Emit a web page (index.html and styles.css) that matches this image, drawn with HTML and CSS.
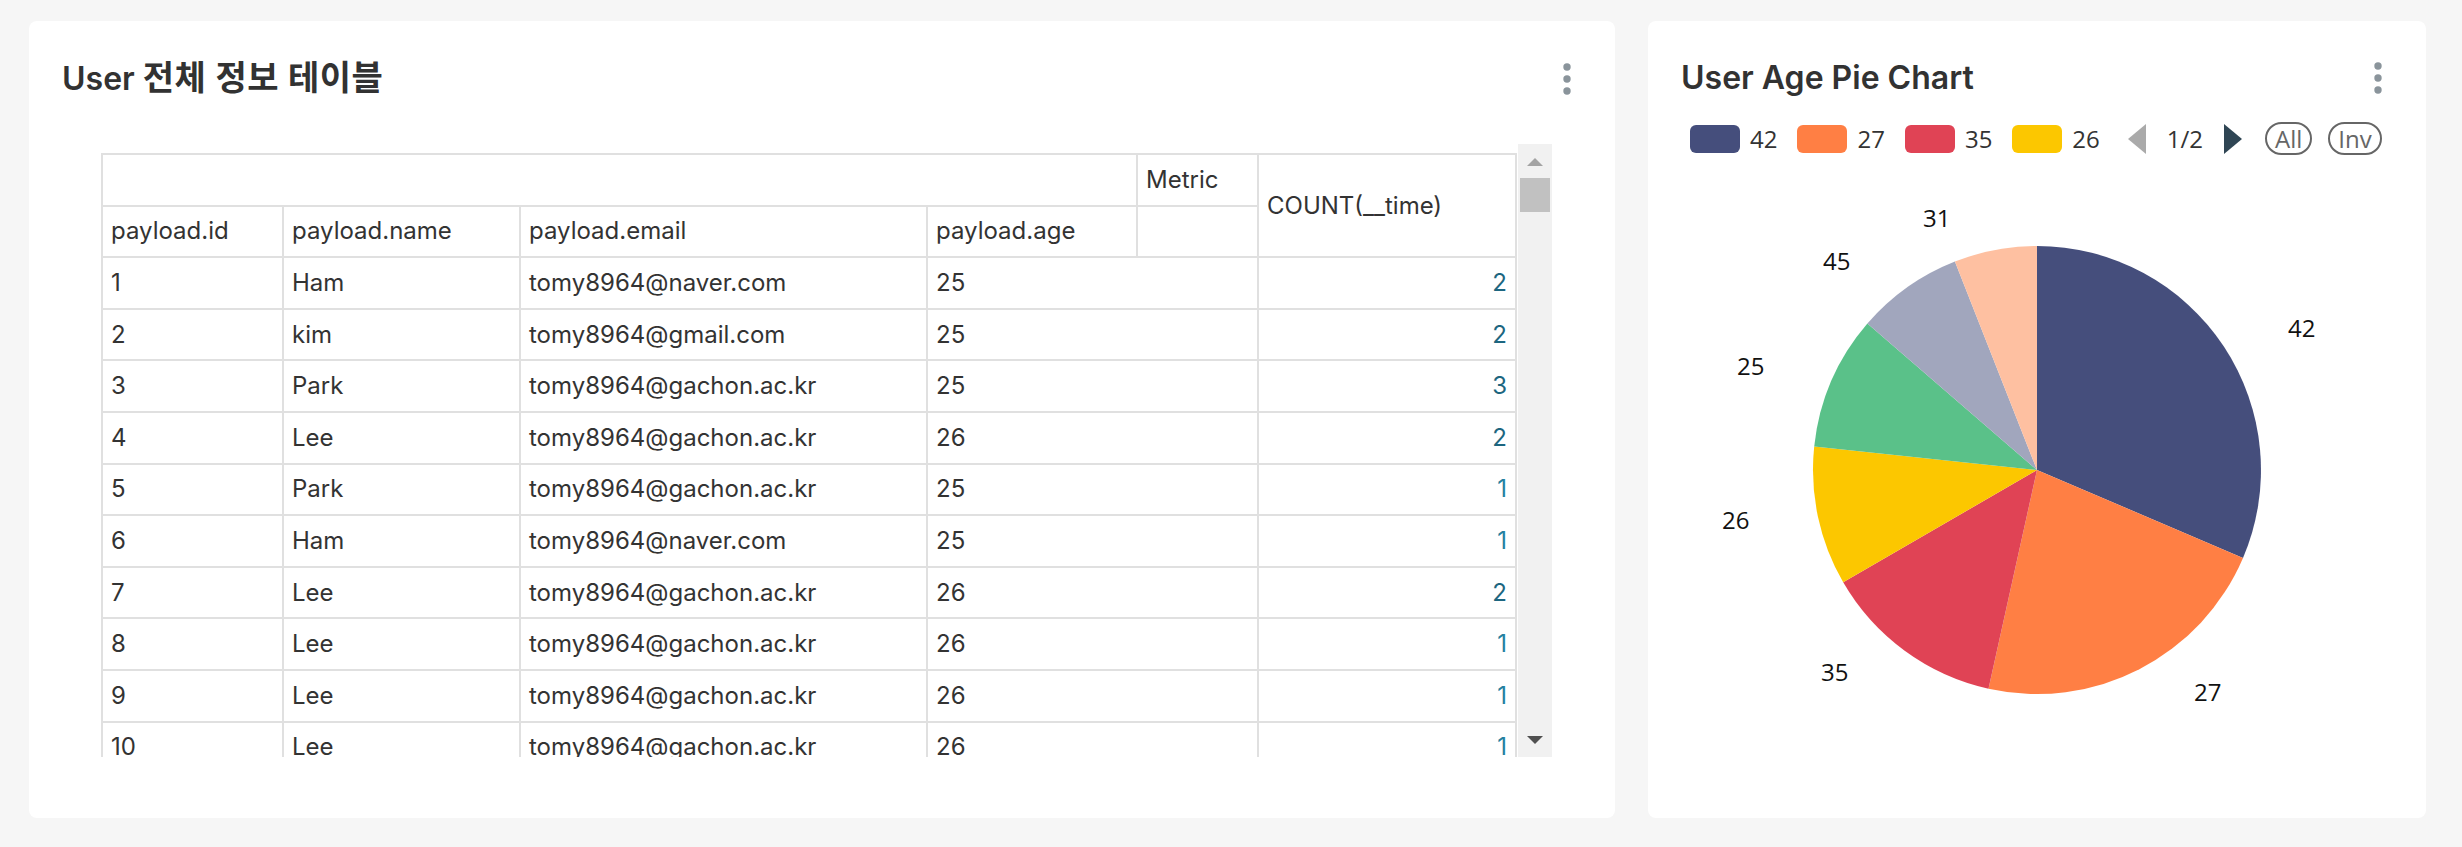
FILE: index.html
```html
<!DOCTYPE html>
<html lang="ko">
<head>
<meta charset="utf-8">
<title>Dashboard</title>
<link rel="stylesheet" href="styles.css">
</head>
<body>
<div class="dashboard">
  <section class="card card-table">
    <header class="card-header">
      <h2 class="card-title">User <span class="ko">전체 정보 테이블</span></h2>
      <span class="kebab"><svg width="8" height="32" viewBox="0 0 8 32"><circle cx="4" cy="4" r="3.7"/><circle cx="4" cy="16" r="3.7"/><circle cx="4" cy="28" r="3.7"/></svg></span>
    </header>
    <div class="table-wrap">
      <div class="table-viewport">
        <table class="data-table">
          <colgroup>
            <col class="c-id"><col class="c-name"><col class="c-email"><col class="c-age"><col class="c-metric"><col class="c-count">
          </colgroup>
          <thead>
            <tr><th colspan="4"></th><th>Metric</th><th rowspan="2">COUNT(__time)</th></tr>
            <tr><th>payload.id</th><th>payload.name</th><th>payload.email</th><th>payload.age</th><th></th></tr>
          </thead>
          <tbody>
            <tr><td>1</td><td>Ham</td><td>tomy8964@naver.com</td><td colspan="2">25</td><td class="num hi">2</td></tr>
            <tr><td>2</td><td>kim</td><td>tomy8964@gmail.com</td><td colspan="2">25</td><td class="num hi">2</td></tr>
            <tr><td>3</td><td>Park</td><td>tomy8964@gachon.ac.kr</td><td colspan="2">25</td><td class="num hi">3</td></tr>
            <tr><td>4</td><td>Lee</td><td>tomy8964@gachon.ac.kr</td><td colspan="2">26</td><td class="num hi">2</td></tr>
            <tr><td>5</td><td>Park</td><td>tomy8964@gachon.ac.kr</td><td colspan="2">25</td><td class="num">1</td></tr>
            <tr><td>6</td><td>Ham</td><td>tomy8964@naver.com</td><td colspan="2">25</td><td class="num">1</td></tr>
            <tr><td>7</td><td>Lee</td><td>tomy8964@gachon.ac.kr</td><td colspan="2">26</td><td class="num hi">2</td></tr>
            <tr><td>8</td><td>Lee</td><td>tomy8964@gachon.ac.kr</td><td colspan="2">26</td><td class="num">1</td></tr>
            <tr><td>9</td><td>Lee</td><td>tomy8964@gachon.ac.kr</td><td colspan="2">26</td><td class="num">1</td></tr>
            <tr><td>10</td><td>Lee</td><td>tomy8964@gachon.ac.kr</td><td colspan="2">26</td><td class="num">1</td></tr>
          </tbody>
        </table>
      </div>
      <div class="scrollbar">
        <span class="sb-up"></span>
        <span class="sb-thumb"></span>
        <span class="sb-down"></span>
      </div>
    </div>
  </section>

  <section class="card card-chart">
    <header class="card-header">
      <h2 class="card-title">User Age Pie Chart</h2>
      <span class="kebab"><svg width="8" height="32" viewBox="0 0 8 32"><circle cx="4" cy="4" r="3.7"/><circle cx="4" cy="16" r="3.7"/><circle cx="4" cy="28" r="3.7"/></svg></span>
    </header>
    <div class="legend">
      <span class="legend-item"><span class="swatch sw-navy"></span>42</span>
      <span class="legend-item"><span class="swatch sw-orange"></span>27</span>
      <span class="legend-item"><span class="swatch sw-red"></span>35</span>
      <span class="legend-item"><span class="swatch sw-yellow"></span>26</span>
      <span class="pager">
        <svg class="pg-arrow" width="18" height="30" viewBox="0 0 18 30"><path d="M18 0 L18 30 L0 15 Z" fill="#aaaaaa"/></svg>
        <span class="pg-count">1/2</span>
        <svg class="pg-arrow" width="18" height="30" viewBox="0 0 18 30"><path d="M0 0 L0 30 L18 15 Z" fill="#2f4554"/></svg>
      </span>
      <span class="sel">All</span>
      <span class="sel sel-inv">Inv</span>
    </div>
    <svg class="pie" width="778" height="600" viewBox="0 0 778 600">
      <path d="M389 300 L389 76 A224 224 0 0 1 595.0 387.9 Z" fill="#454E7C"/>
      <path d="M389 300 L595.0 387.9 A224 224 0 0 1 340.5 518.7 Z" fill="#FF7F44"/>
      <path d="M389 300 L340.5 518.7 A224 224 0 0 1 195.2 412.3 Z" fill="#E04355"/>
      <path d="M389 300 L195.2 412.3 A224 224 0 0 1 166.2 276.6 Z" fill="#FCC700"/>
      <path d="M389 300 L166.2 276.6 A224 224 0 0 1 219.4 153.6 Z" fill="#5AC189"/>
      <path d="M389 300 L219.4 153.6 A224 224 0 0 1 306.9 91.6 Z" fill="#A1A6BD"/>
      <path d="M389 300 L306.9 91.6 A224 224 0 0 1 389 76 Z" fill="#FEC0A1"/>
      <g class="pie-labels">
        <text x="640" y="167">42</text>
        <text x="546" y="531">27</text>
        <text x="173" y="511">35</text>
        <text x="74" y="359">26</text>
        <text x="89" y="205">25</text>
        <text x="175" y="100">45</text>
        <text x="275" y="57">31</text>
      </g>
    </svg>
  </section>
</div>
</body>
</html>
```
FILE: styles.css
```css
* { box-sizing: border-box; }

body {
  margin: 0;
  background: #f6f6f6;
  font-family: Inter, "Noto Sans CJK KR", sans-serif;
  color: #333333;
}

.dashboard {
  display: grid;
  grid-template-columns: 1586px 778px;
  column-gap: 33px;
  padding: 21px 0 0 29px;
}

.card {
  background: #ffffff;
  border-radius: 8px;
  height: 797px;
  display: flex;
  flex-direction: column;
}

.card-header {
  display: flex;
  align-items: center;
  justify-content: space-between;
  padding: 37px 44px 0 33px;
}

.card-title {
  margin: 0;
  font-size: 32px;
  line-height: 40px;
  font-weight: 600;
  color: #323232;
}

.card-title .ko {
  font-size: 34px;
  letter-spacing: 0.5px;
}

.kebab {
  display: flex;
}

.kebab svg {
  fill: #8a949b;
}

/* ---------- table ---------- */
.table-wrap {
  display: flex;
  margin: 45px 63px 0 72px;
  height: 613px;
}

.table-viewport {
  flex: 1;
  overflow: hidden;
  padding-top: 9px;
}

.data-table {
  border-collapse: separate;
  border-spacing: 0;
  table-layout: fixed;
  width: 1416px;
  border-top: 2px solid #e0e0e0;
  border-left: 2px solid #e0e0e0;
  font-size: 24px;
  line-height: 24px;
  color: #333333;
}

.c-id { width: 181px; }
.c-name { width: 237px; }
.c-email { width: 407px; }
.c-age { width: 210px; }
.c-metric { width: 121px; }
.c-count { width: 258px; }

.data-table th,
.data-table td {
  border-right: 2px solid #e0e0e0;
  border-bottom: 2px solid #e0e0e0;
  padding: 12.8px 8px;
  text-align: left;
  font-weight: 400;
  vertical-align: middle;
  white-space: nowrap;
  overflow: hidden;
}

.data-table td.num {
  text-align: right;
  color: #2480a0;
}

.data-table td.num.hi {
  color: #1c6680;
}

/* fake scrollbar */
.scrollbar {
  width: 34px;
  background: #f1f1f1;
  display: flex;
  flex-direction: column;
  align-items: center;
}

.sb-up {
  margin-top: 14px;
  width: 0;
  height: 0;
  border-left: 8px solid transparent;
  border-right: 8px solid transparent;
  border-bottom: 8px solid #a3a3a3;
}

.sb-thumb {
  margin-top: 12px;
  width: 30px;
  height: 34px;
  background: #c1c1c1;
}

.sb-down {
  margin-top: auto;
  margin-bottom: 13px;
  width: 0;
  height: 0;
  border-left: 8px solid transparent;
  border-right: 8px solid transparent;
  border-top: 8px solid #505050;
}

/* ---------- chart ---------- */
.legend {
  display: flex;
  align-items: center;
  height: 33px;
  margin: 24px 0 0 42px;
  font-family: "Open Sans", sans-serif;
  font-size: 24px;
  color: #333333;
}

.legend-item {
  display: flex;
  align-items: center;
  margin-right: 20px;
}

.swatch {
  width: 50px;
  height: 28px;
  border-radius: 6px;
  margin-right: 10px;
}

.sw-navy { background: #454E7C; }
.sw-orange { background: #FF7F44; }
.sw-red { background: #E04355; }
.sw-yellow { background: #FCC700; }

.pager {
  display: flex;
  align-items: center;
  margin-left: 8px;
}

.pg-count {
  margin: 0 21px;
}

.sel {
  margin-left: 23px;
  height: 33px;
  line-height: 29px;
  padding: 0 8px;
  border: 2px solid #666666;
  border-radius: 17px;
  color: #666666;
}

.sel-inv {
  margin-left: 16px;
}

.pie {
  display: block;
  margin-top: 15px;
}

.pie-labels text {
  font-family: "Open Sans", sans-serif;
  font-size: 24px;
  fill: #111111;
}
```
